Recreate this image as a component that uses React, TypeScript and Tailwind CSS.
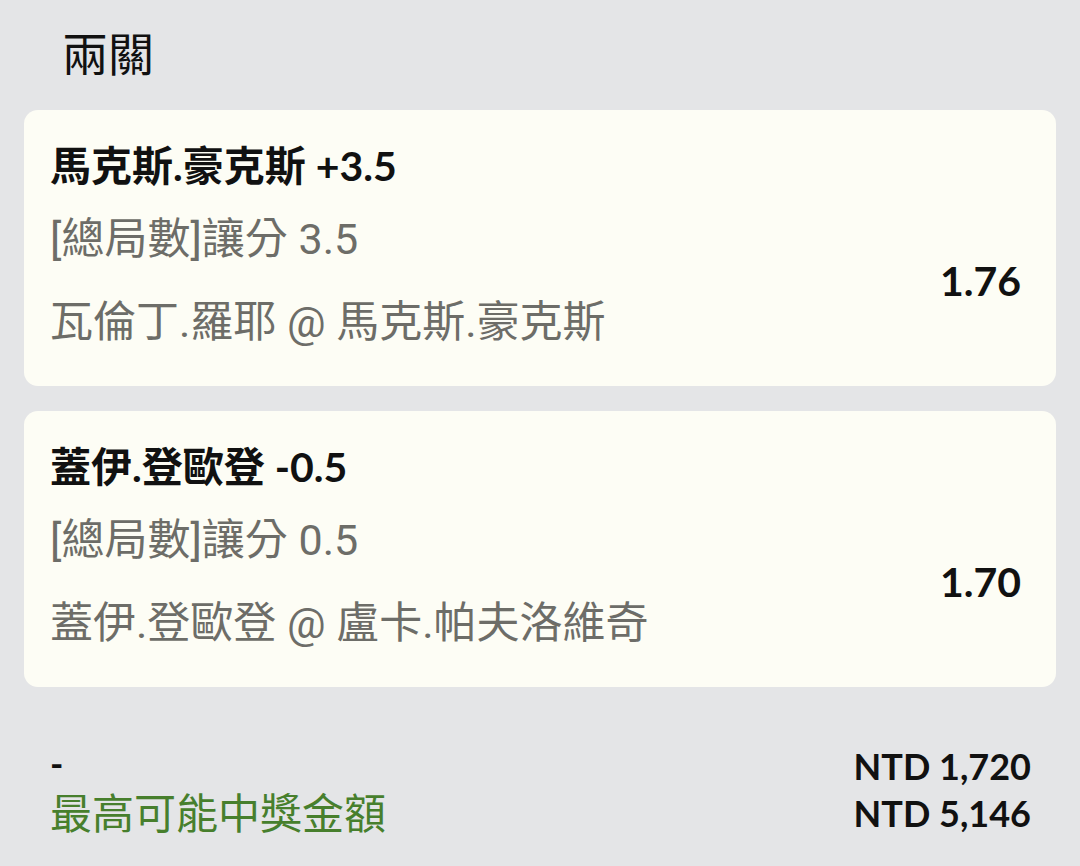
import React from "react";

const FONT = { fontFamily: 'Lato, "Noto Sans CJK TC", "Noto Sans", sans-serif' };
const SUB = { fontFamily: 'Roboto, "Noto Sans CJK TC", "Noto Sans", sans-serif' };

type Bet = { title: string; market: string; match: string; odds: string };

const bets: Bet[] = [
  {
    title: "馬克斯.豪克斯 +3.5",
    market: "[總局數]讓分 3.5",
    match: "瓦倫丁.羅耶 @ 馬克斯.豪克斯",
    odds: "1.76",
  },
  {
    title: "蓋伊.登歐登 -0.5",
    market: "[總局數]讓分 0.5",
    match: "蓋伊.登歐登 @ 盧卡.帕夫洛維奇",
    odds: "1.70",
  },
];

function BetCard({ bet }: { bet: Bet }) {
  return (
    <div className="bg-[#fdfdf5] rounded-[14px] pl-[26px] pr-[35px] pt-[28px] pb-[36px]">
      <div className="text-[41px] leading-[56px] font-bold text-[#111111]">{bet.title}</div>
      <div className="flex items-center justify-between mt-[17px]">
        <div className="flex flex-col text-[#6d6d68] text-[43px]" style={SUB}>
          <div className="leading-[56px]">{bet.market}</div>
          <div className="leading-[56px] mt-[27px]">{bet.match}</div>
        </div>
        <div className="text-[41px] leading-[56px] font-bold text-[#111111]">{bet.odds}</div>
      </div>
    </div>
  );
}

export default function App() {
  return (
    <div className="w-[1080px] h-[866px] bg-[#e4e5e7] overflow-hidden" style={FONT}>
      <div className="pl-[62px] pt-[23px] mb-[26px] text-[46px] leading-[61px] text-[#111111]">兩關</div>
      <div className="px-[24px] flex flex-col gap-[25px]">
        {bets.map((b) => (
          <BetCard key={b.title} bet={b} />
        ))}
      </div>
      <div className="mt-[56px] pl-[50px] pr-[49px] flex justify-between">
        <div className="flex flex-col">
          <div className="text-[36px] leading-[47px] font-bold text-[#111111] -translate-y-[3px]">-</div>
          <div className="text-[42px] leading-[47px] text-[#477f2d]">最高可能中獎金額</div>
        </div>
        <div className="flex flex-col items-end text-[36px] leading-[47px] font-bold text-[#111111]">
          <div>NTD 1,720</div>
          <div>NTD 5,146</div>
        </div>
      </div>
    </div>
  );
}
